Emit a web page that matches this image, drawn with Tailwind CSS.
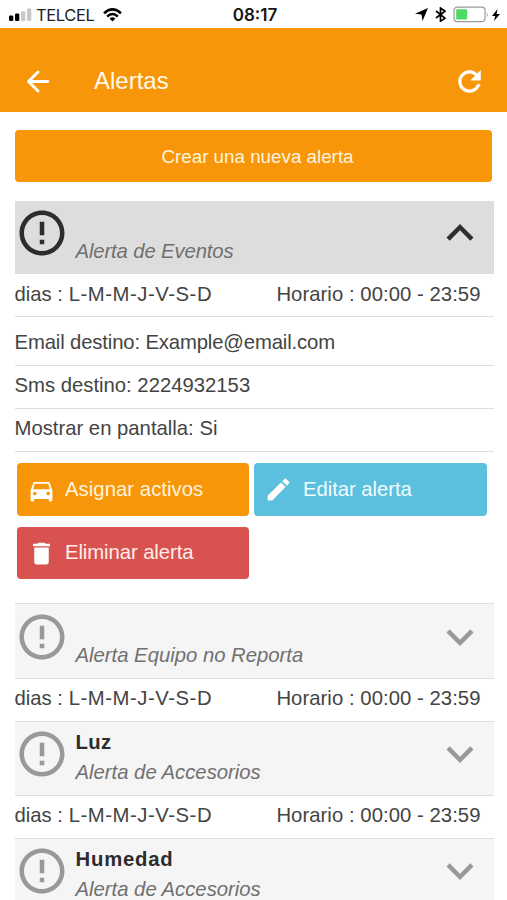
<!DOCTYPE html>
<html lang="es">
<head>
<meta charset="utf-8">
<title>Alertas</title>
<script src="https://cdn.jsdelivr.net/npm/@tailwindcss/browser@4"></script>
</head>
<body class="bg-white">
<svg class="hidden">
  <symbol id="alert" viewBox="0 0 24 24"><path d="M11 15h2v2h-2zm0-8h2v6h-2zm.99-5C6.47 2 2 6.48 2 12s4.47 10 9.99 10C17.52 22 22 17.52 22 12S17.52 2 11.99 2zM12 20c-4.42 0-8-3.58-8-8s3.58-8 8-8 8 3.58 8 8-3.58 8-8 8z"/></symbol>
  <symbol id="down" viewBox="0 0 24 24"><path d="M16.59 8.59L12 13.17 7.41 8.59 6 10l6 6 6-6z"/></symbol>
  <symbol id="up" viewBox="0 0 24 24"><path d="M12 8l-6 6 1.41 1.41L12 10.83l4.59 4.58L18 14z"/></symbol>
</svg>
<div class="w-[507px] h-[900px] overflow-hidden bg-white font-['Liberation_Sans',Arial,sans-serif] text-[20.3px] leading-6 text-[#444444] whitespace-nowrap">
  <div class="grid grid-cols-3 items-center h-7 text-black">
    <div class="flex items-center pl-[9px] pt-px">
      <svg class="w-[23px] h-[14px]" viewBox="0 0 23 14"><rect x="0" y="7.5" width="4.3" height="5.5" rx="1.2"/><rect x="6" y="5.5" width="4.3" height="7.5" rx="1.2"/><rect x="12" y="3.2" width="4.3" height="9.8" rx="1" fill="#c8c8c8"/><rect x="18" y="0.5" width="4.3" height="12.5" rx="1" fill="#c8c8c8"/></svg>
      <span class="ml-[4px] text-[16.5px] leading-5 tracking-[-0.4px] text-[#222222] font-['Inter','Liberation_Sans',sans-serif]">TELCEL</span>
      <svg class="ml-[9px] w-[19px] h-[14px]" viewBox="0 0 19 14" fill="none" stroke="#000" stroke-width="2.5"><path d="M1 5.2Q9.500-2.500 18 5.200"/><path d="M4.200 8.500Q9.500 3.600 14.800 8.500"/><path d="M6.600 10.500Q9.500 8 12.400 10.500L9.500 13.600z" fill="#000" stroke="none"/></svg>
    </div>
    <div class="text-center pl-[3px] pt-px text-[17px] leading-5 font-semibold text-[#151515] font-['Inter','Liberation_Sans',sans-serif]">08:17</div>
    <div class="flex items-center justify-end pr-[7px] pt-px">
      <svg class="w-[13px] h-[13px]" viewBox="0 0 13 13"><path d="M13 0L7.500 13 6.500 6.500 0 5.800z"/></svg>
      <svg class="ml-[7px] w-[11px] h-[15px]" viewBox="0 0 11 15" fill="none" stroke="#000" stroke-width="1.700"><path d="M1 4l9 7.200-4.500 3V1L10 4.200 1 11"/></svg>
      <svg class="ml-[7px] w-[36px] h-[17px]" viewBox="0 0 36 17"><rect x="1" y="1.200" width="31" height="14.500" rx="3.200" fill="#fff" stroke="#999" stroke-width="1.200"/><rect x="3.200" y="3.300" width="11" height="10.300" rx="1" fill="#4cd964"/><path d="M33.800 6q1.800 2.500 0 5z" fill="#999"/></svg>
      <svg class="ml-[3px] w-[8px] h-[12px]" viewBox="0 0 8 12"><path d="M5.500 0L0 7h3.200L2 12 8 5H4.600z"/></svg>
    </div>
  </div>

  <header class="flex items-center h-[84px] pt-[23px] pl-[27px] pr-[21px] bg-[#f89609] text-white">
    <svg class="w-[23px] h-[23px]" viewBox="0 0 23 23" fill="none" stroke="#fff" stroke-width="2.900" stroke-linecap="round" stroke-linejoin="round"><path d="M20.800 11.500H2M11 2l-9.500 9.500L11 21"/></svg>
    <h1 class="ml-[44px] text-[24px] leading-7 text-[#fff8ea] relative -top-px">Alertas</h1>
    <svg class="ml-auto w-[33px] h-[33px]" viewBox="0 0 24 24" fill="#fff" stroke="#fff" stroke-width=".4"><path d="M17.650 6.350C16.200 4.900 14.210 4 12 4c-4.420 0-7.990 3.580-7.990 8s3.570 8 7.990 8c3.730 0 6.840-2.550 7.730-6h-2.080c-.820 2.330-3.040 4-5.650 4-3.310 0-6-2.690-6-6s2.690-6 6-6c1.660 0 3.140.690 4.220 1.780L13 11h7V4l-2.350 2.350z"/></svg>
  </header>

  <main class="pl-[14.5px] pr-[13.5px] pt-[18px]">
    <button class="block w-[477px] h-[52px] pl-[9px] pt-px rounded bg-[#f89609] text-[#fff3dc] text-[18.800px]">Crear una nueva alerta</button>

    <section class="mt-[18.5px]">
      <div class="flex h-[73.5px] pt-[5px] bg-[#dddddd]">
        <svg class="w-[54px] h-[54px] fill-[#2d2d2d]"><use href="#alert"/></svg>
        <div class="ml-[7px] pt-[33px] italic text-[#707070] tracking-[-0.12px]">Alerta de Eventos</div>
        <svg class="ml-auto mr-[7px] w-[54px] h-[54px] fill-[#2d2d2d]"><use href="#up"/></svg>
      </div>
      <div class="flex justify-between items-center h-[43px] pr-[13px] pb-[3px] border-b border-[#dddddd]"><span>dias : <span class="tracking-[0.55px]">L-M-M-J-V-S-D</span></span><span class="tracking-[0.05px]">Horario : 00:00 - 23:59</span></div>
      <div class="flex items-center h-[49px] pt-px border-b border-[#dddddd] tracking-[-0.14px]">Email destino: Example@email.com</div>
      <div class="flex items-center h-[43px] pb-[4px] border-b border-[#dddddd]">Sms destino: 2224932153</div>
      <div class="flex items-center h-[43px] pb-[4px] border-b border-[#dddddd]">Mostrar en pantalla: Si</div>
      <div class="grid grid-cols-[232px_233px] gap-x-[5px] gap-y-[11px] pl-[2.5px] pt-[11px] pb-[24px]">
        <button class="flex items-center h-[53px] pl-[10px] rounded bg-[#f89609] text-[#fff3dc]">
          <svg class="w-[29px] h-[29px] mt-[2px]" viewBox="0 0 24 24" fill="#fff"><path d="M18.920 6.010C18.720 5.420 18.160 5 17.500 5h-11c-.660 0-1.210.420-1.420 1.010L3 12v8c0 .550.450 1 1 1h1c.550 0 1-.450 1-1v-1h12v1c0 .550.450 1 1 1h1c.550 0 1-.450 1-1v-8l-2.080-5.990zM6.500 16c-.830 0-1.500-.670-1.500-1.500S5.670 13 6.500 13s1.500.670 1.500 1.500S7.330 16 6.500 16zm11 0c-.830 0-1.500-.670-1.500-1.500s.670-1.500 1.500-1.500 1.500.670 1.500 1.500-.670 1.500-1.500 1.500zM5 11l1.500-4.500h11L19 11H5z"/></svg>
          <span class="ml-[9px] pb-[2px] tracking-[0.05px]">Asignar activos</span>
        </button>
        <button class="flex items-center h-[53px] pl-[10px] rounded bg-[#5bc0de] text-[#f0fcff]">
          <svg class="w-[29px] h-[29px]" viewBox="0 0 24 24" fill="#fff"><path d="M3 17.250V21h3.750L17.810 9.940l-3.750-3.750L3 17.250zM20.710 7.040c.390-.390.390-1.020 0-1.410l-2.340-2.340c-.390-.390-1.020-.390-1.410 0l-1.830 1.830 3.750 3.750 1.830-1.830z"/></svg>
          <span class="ml-[10px] pb-[2px] tracking-[-0.05px]">Editar alerta</span>
        </button>
        <button class="flex items-center h-[52px] pl-[10px] rounded bg-[#d8534f] text-[#ffeceb]">
          <svg class="w-[29px] h-[29px]" viewBox="0 0 24 24" fill="#fff"><path d="M6 19c0 1.100.900 2 2 2h8c1.100 0 2-.900 2-2V7H6v12zM19 4h-3.500l-1-1h-5l-1 1H5v2h14V4z"/></svg>
          <span class="ml-[9px] pb-[2px] tracking-[-0.08px]">Eliminar alerta</span>
        </button>
      </div>
    </section>

    <section>
      <div class="flex h-[76px] pt-[6px] bg-[#f5f5f5] border-y border-[#dddddd]">
        <svg class="w-[54px] h-[54px] fill-[#999999]"><use href="#alert"/></svg>
        <div class="ml-[7px] pt-[33px] italic text-[#707070]">Alerta Equipo no Reporta</div>
        <svg class="ml-auto mr-[7px] w-[54px] h-[54px] fill-[#999999]"><use href="#down"/></svg>
      </div>
      <div class="flex justify-between items-center h-[42px] pr-[13px] pb-[4px]"><span>dias : <span class="tracking-[0.55px]">L-M-M-J-V-S-D</span></span><span class="tracking-[0.05px]">Horario : 00:00 - 23:59</span></div>
    </section>

    <section>
      <div class="flex h-[75px] pt-[5px] bg-[#f5f5f5] border-y border-[#dddddd]">
        <svg class="w-[54px] h-[54px] fill-[#999999]"><use href="#alert"/></svg>
        <div class="ml-[7px] pt-[3px]">
          <div class="font-bold text-[#2d2d2d] tracking-[0.3px]">Luz</div>
          <div class="pt-[6px] italic text-[#707070]">Alerta de Accesorios</div>
        </div>
        <svg class="ml-auto mr-[7px] w-[54px] h-[54px] fill-[#999999]"><use href="#down"/></svg>
      </div>
      <div class="flex justify-between items-center h-[42px] pr-[13px] pb-[4px]"><span>dias : <span class="tracking-[0.55px]">L-M-M-J-V-S-D</span></span><span class="tracking-[0.05px]">Horario : 00:00 - 23:59</span></div>
    </section>

    <section>
      <div class="flex h-[75px] pt-[5px] bg-[#f5f5f5] border-y border-[#dddddd]">
        <svg class="w-[54px] h-[54px] fill-[#999999]"><use href="#alert"/></svg>
        <div class="ml-[7px] pt-[3px]">
          <div class="font-bold text-[#2d2d2d] tracking-[0.8px]">Humedad</div>
          <div class="pt-[6px] italic text-[#707070]">Alerta de Accesorios</div>
        </div>
        <svg class="ml-auto mr-[7px] w-[54px] h-[54px] fill-[#999999]"><use href="#down"/></svg>
      </div>
    </section>
  </main>
</div>
</body>
</html>
